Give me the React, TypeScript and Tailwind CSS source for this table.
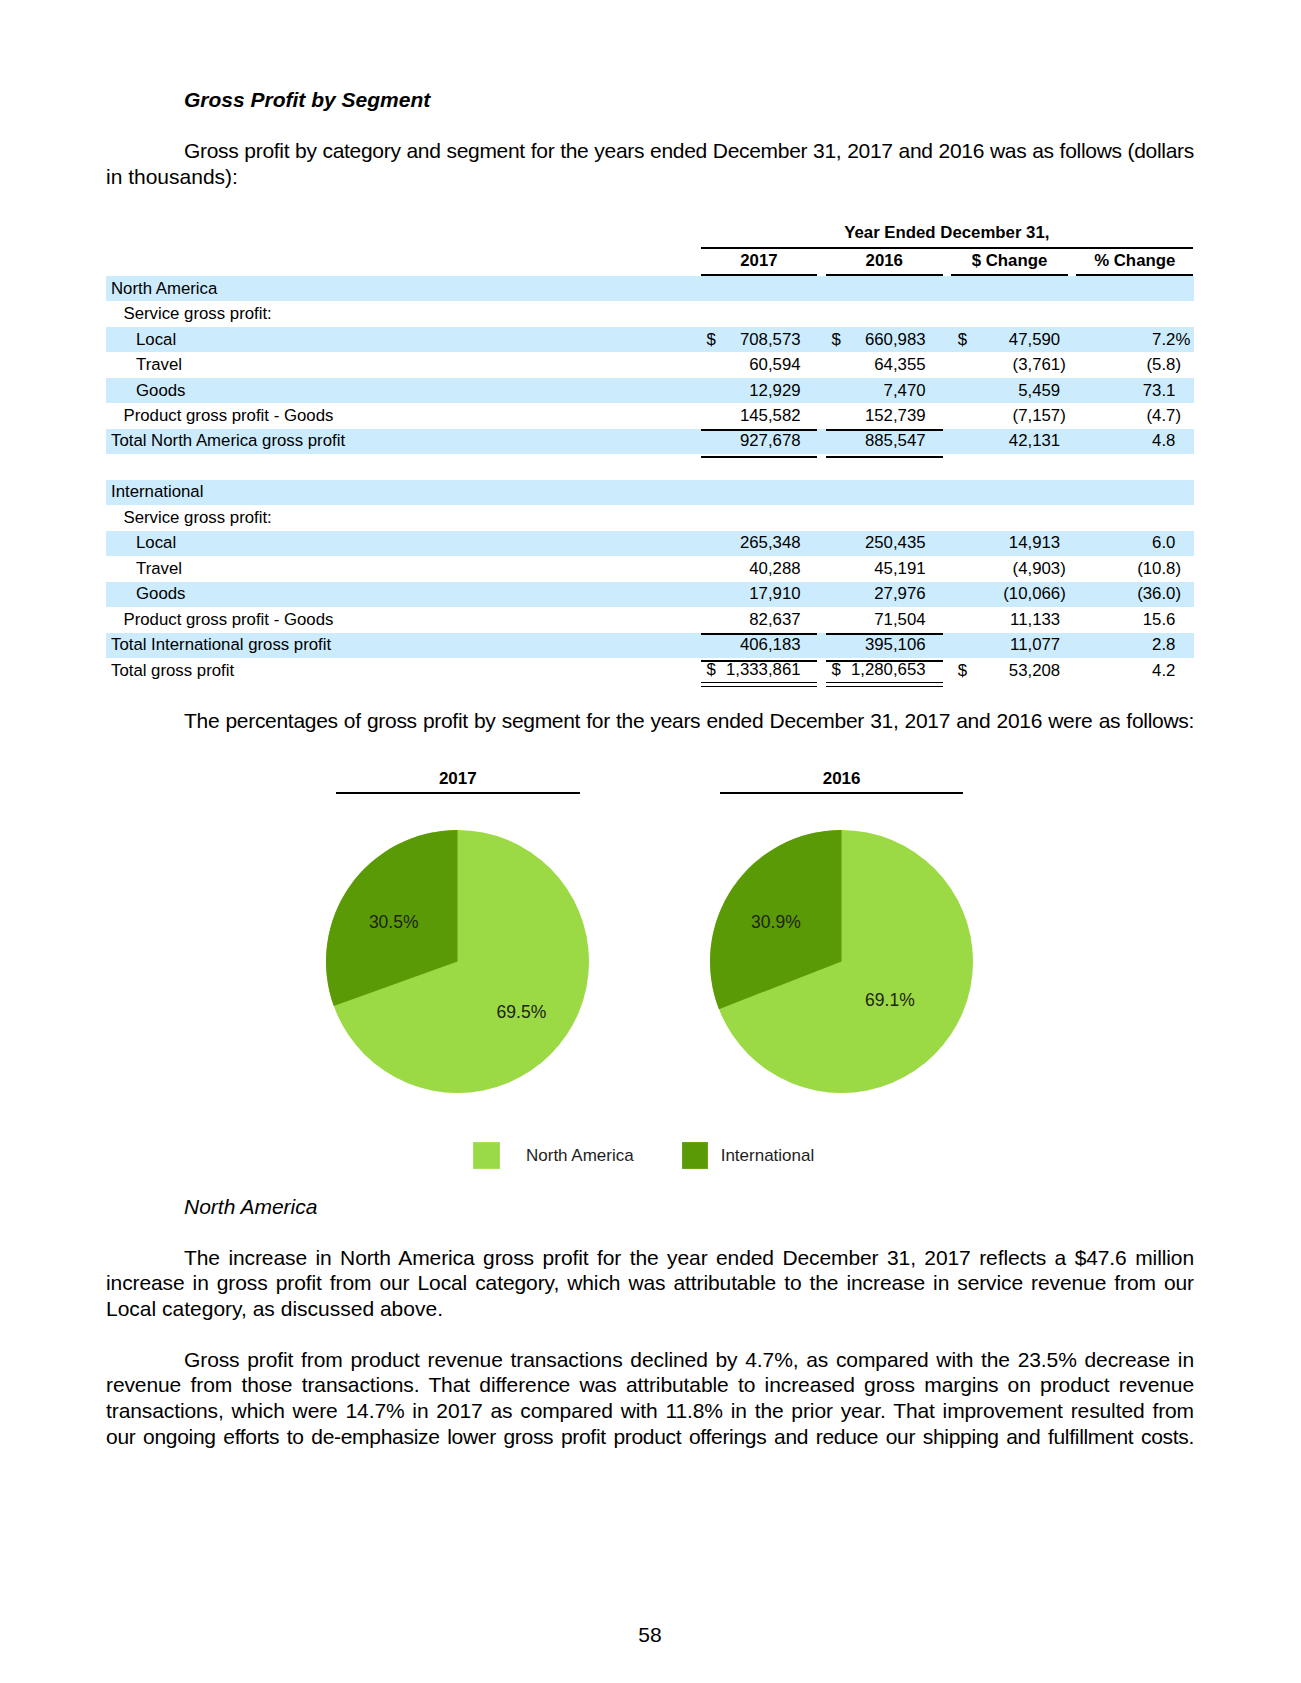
type Cell = { d?: boolean; v: string; hang?: string };
type Row = { label: string; level: 0 | 1 | 2; band?: boolean; cells?: Cell[]; kind?: 'total' | 'grand' };

const c = (raw: string, d = false): Cell => {
  if (raw.startsWith('(')) return { d, v: raw.slice(0, -1), hang: ')' };
  if (raw.endsWith('%')) return { d, v: raw.slice(0, -1), hang: '%' };
  return { d, v: raw };
};

const rows: Row[] = [
  { label: 'North America', level: 0, band: true },
  { label: 'Service gross profit:', level: 1 },
  { label: 'Local', level: 2, band: true, cells: [c('708,573', true), c('660,983', true), c('47,590', true), c('7.2%')] },
  { label: 'Travel', level: 2, cells: [c('60,594'), c('64,355'), c('(3,761)'), c('(5.8)')] },
  { label: 'Goods', level: 2, band: true, cells: [c('12,929'), c('7,470'), c('5,459'), c('73.1')] },
  { label: 'Product gross profit - Goods', level: 1, cells: [c('145,582'), c('152,739'), c('(7,157)'), c('(4.7)')] },
  { label: 'Total North America gross profit', level: 0, band: true, kind: 'total', cells: [c('927,678'), c('885,547'), c('42,131'), c('4.8')] },
  { label: '', level: 0 },
  { label: 'International', level: 0, band: true },
  { label: 'Service gross profit:', level: 1 },
  { label: 'Local', level: 2, band: true, cells: [c('265,348'), c('250,435'), c('14,913'), c('6.0')] },
  { label: 'Travel', level: 2, cells: [c('40,288'), c('45,191'), c('(4,903)'), c('(10.8)')] },
  { label: 'Goods', level: 2, band: true, cells: [c('17,910'), c('27,976'), c('(10,066)'), c('(36.0)')] },
  { label: 'Product gross profit - Goods', level: 1, cells: [c('82,637'), c('71,504'), c('11,133'), c('15.6')] },
  { label: 'Total International gross profit', level: 0, band: true, kind: 'total', cells: [c('406,183'), c('395,106'), c('11,077'), c('2.8')] },
  { label: 'Total gross profit', level: 0, kind: 'grand', cells: [c('1,333,861', true), c('1,280,653', true), c('53,208', true), c('4.2')] },
];

const indent = ['pl-[5px]', 'pl-[17.5px]', 'pl-[30px]'];
const pad = ['pl-[6px] pr-[16.7px]', 'pl-[5.7px] pr-[17px]', 'pl-[6.7px] pr-[7.7px]', 'pr-[17.6px]'];
const grid = 'grid grid-cols-[586px_116.7px_116.7px_116.7px_116.6px] gap-x-[8.6px]';

// total rows: text sits a little above the middle of the band
const lift = (kind?: Row['kind']) => (kind === 'total' ? 'pb-[5px]' : kind === 'grand' ? 'pb-[4px]' : '');

function Value({ cell }: { cell?: Cell }) {
  if (!cell) return null;
  return (
    <>
      {cell.d && <span>$</span>}
      <span className="ml-auto">
        {cell.v}
        {cell.hang && <span className="inline-block w-0">{cell.hang}</span>}
      </span>
    </>
  );
}

function NumCell({ cell, col, kind }: { cell?: Cell; col: number; kind?: Row['kind'] }) {
  if (col < 2 && kind === 'grand') {
    return (
      <div className="flex h-full flex-col">
        <div className={`flex h-[24px] items-center whitespace-nowrap ${pad[col]}`}>
          <Value cell={cell} />
        </div>
        <div className="mt-auto h-[5px] border-y-[1.6px] border-black" />
      </div>
    );
  }
  let rule = lift(kind);
  if (col < 2 && kind === 'total') rule = 'border-t-2 border-b-2 border-black pb-[5px]';
  return (
    <div className={`flex h-full items-center whitespace-nowrap ${pad[col]} ${rule}`}>
      <Value cell={cell} />
    </div>
  );
}

function GrossTable() {
  return (
    <div className="mt-[32px] text-[16.8px] leading-[20px] text-black">
      <div className={`${grid} h-[27px]`}>
        <div />
        <div className="col-span-4 border-b-2 border-black pt-[1px] text-center font-bold">Year Ended December 31,</div>
      </div>
      <div className={`${grid} h-[27px]`}>
        <div />
        {['2017', '2016', '$ Change', '% Change'].map((h) => (
          <div key={h} className="border-b-2 border-black pt-[2.5px] text-center font-bold">
            {h}
          </div>
        ))}
      </div>
      {rows.map((r, i) => (
        <div
          key={i}
          className={`${grid} ${r.kind === 'grand' ? 'h-[28px]' : 'h-[25.47px]'} ${r.band ? 'bg-[#ccecfd]' : ''}`}
        >
          <div className={`flex items-center whitespace-nowrap ${indent[r.level]} ${lift(r.kind)}`}>{r.label}</div>
          {[0, 1, 2, 3].map((col) => (
            <NumCell key={col} cell={r.cells?.[col]} col={col} kind={r.kind} />
          ))}
        </div>
      ))}
    </div>
  );
}

const LIGHT = '#9bd945';
const DARK = '#5b9a07';

function Pie({ year, endX, endY, a, b }: { year: string; endX: number; endY: number; a: [string, number, number]; b: [string, number, number] }) {
  return (
    <div className="flex w-[263px] flex-col items-center">
      <div className="w-[243.6px] border-b-2 border-black pb-[3px] text-center text-[17px] font-bold leading-[20px]">{year}</div>
      <svg className="mt-[36.7px]" width="263" height="263" viewBox="0 0 263 263">
        <circle cx="131.5" cy="131.5" r="131.5" fill={LIGHT} />
        <path d={`M131.5 131.5 L131.5 0 A131.5 131.5 0 0 0 ${endX} ${endY} Z`} fill={DARK} />
        <text x={a[1]} y={a[2]} textAnchor="middle" dominantBaseline="central" fontSize="17.5" fill="#1e2412">
          {a[0]}
        </text>
        <text x={b[1]} y={b[2]} textAnchor="middle" dominantBaseline="central" fontSize="17.5" fill="#1e2412">
          {b[0]}
        </text>
      </svg>
    </div>
  );
}

type Line = { t: string; tight?: boolean };

function Para({ lines, last, className = '' }: { lines: Line[]; last?: string; className?: string }) {
  return (
    <div className={`text-[21px] leading-[25.8px] ${className}`}>
      {lines.map((l, i) => (
        <span
          key={l.t}
          className={`block whitespace-nowrap text-justify [text-align-last:justify] ${i === 0 ? 'pl-[78px]' : ''} ${
            l.tight ? 'tracking-[-0.3px]' : 'tracking-[-0.1px]'
          }`}
        >
          {l.t}
        </span>
      ))}
      {last && <span className="block">{last}</span>}
    </div>
  );
}

export default function App() {
  return (
    <div className="h-[1683px] w-[1301px] bg-white font-['Liberation_Sans',Arial,sans-serif] text-black">
      <div className="ml-[106px] w-[1088px] pt-[87px]">
        <h2 className="pl-[78px] text-[21px] font-bold italic leading-[26px]">Gross Profit by Segment</h2>

        <Para
          className="mt-[25.4px]"
          lines={[{ t: 'Gross profit by category and segment for the years ended December 31, 2017 and 2016 was as follows (dollars', tight: true }]}
          last="in thousands):"
        />

        <GrossTable />

        <Para
          className="mt-[21.5px]"
          lines={[{ t: 'The percentages of gross profit by segment for the years ended December 31, 2017 and 2016 were as follows:', tight: true }]}
        />

        <div className="mt-[35.2px] flex gap-x-[120.8px] pl-[220.3px]">
          <Pie year="2017" endX={7.77} endY={176.04} a={['30.5%', 67.7, 92]} b={['69.5%', 195.4, 181.5]} />
          <Pie year="2016" endX={8.93} endY={179.13} a={['30.9%', 65.9, 92]} b={['69.1%', 179.9, 170]} />
        </div>

        <div className="mt-[48.6px] flex items-center text-[17px] text-[#1e1e1e]">
          <div className="ml-[367.3px] h-[27.7px] w-[26.7px] border border-[#a6df5a] bg-[#9ad947]" />
          <span className="ml-[26px] w-[155.7px] leading-[20px]">North America</span>
          <div className="h-[27.7px] w-[26.7px] border border-[#6aa51c] bg-[#5b9a07]" />
          <span className="ml-[12.3px] leading-[20px]">International</span>
        </div>

        <h3 className="mt-[24.6px] pl-[78px] text-[21px] italic leading-[25.8px]">North America</h3>

        <Para
          className="mt-[24.7px]"
          lines={[
            { t: 'The increase in North America gross profit for the year ended December 31, 2017 reflects a $47.6 million' },
            { t: 'increase in gross profit from our Local category, which was attributable to the increase in service revenue from our' },
          ]}
          last="Local category, as discussed above."
        />

        <Para
          className="mt-[24.6px]"
          lines={[
            { t: 'Gross profit from product revenue transactions declined by 4.7%, as compared with the 23.5% decrease in' },
            { t: 'revenue from those transactions. That difference was attributable to increased gross margins on product revenue' },
            { t: 'transactions, which were 14.7% in 2017 as compared with 11.8% in the prior year. That improvement resulted from' },
            { t: 'our ongoing efforts to de-emphasize lower gross profit product offerings and reduce our shipping and fulfillment costs.', tight: true },
          ]}
        />

        <div className="mt-[171.8px] text-center text-[21px] leading-[25.8px]">58</div>
      </div>
    </div>
  );
}
